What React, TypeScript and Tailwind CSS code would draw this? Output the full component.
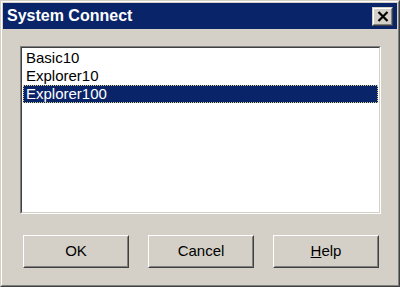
import React from "react";

const font = { fontFamily: '"Liberation Sans", Arial, sans-serif' };

function Btn({ children }: { children: React.ReactNode }) {
  return (
    <div className="w-[106px] h-[33px] border border-t-white border-l-white border-r-[#404040] border-b-[#404040] bg-[#d4d0c8]">
      <div className="w-full h-full border border-t-[#d4d0c8] border-l-[#d4d0c8] border-r-[#808080] border-b-[#808080] flex items-center justify-center text-[15px] text-black">
        {children}
      </div>
    </div>
  );
}

export default function App() {
  const items = ["Basic10", "Explorer10", "Explorer100"];
  return (
    <div
      className="w-[400px] h-[287px] bg-[#d4d0c8] border border-t-[#d4d0c8] border-l-[#d4d0c8] border-r-[#404040] border-b-[#404040]"
      style={font}
    >
      <div className="w-full h-full border border-t-white border-l-white border-r-[#808080] border-b-[#808080] p-[1px] flex flex-col">
        <div className="h-[26px] bg-[#0a246a] flex items-start justify-between pl-[4px] pr-[4px]">
          <span className="text-white font-bold text-[16px] leading-[26px]">System Connect</span>
          <div className="mt-[4px] w-[21px] h-[19px] bg-[#d4d0c8] border border-t-[#d4d0c8] border-l-[#d4d0c8] border-r-[#404040] border-b-[#404040]">
            <div className="w-full h-full border border-t-white border-l-white border-r-[#808080] border-b-[#808080] flex items-center justify-center">
              <svg width="12" height="11" viewBox="0 0 12 11">
                <path d="M1.5 1 L10.5 10 M10.5 1 L1.5 10" stroke="#000" strokeWidth="2.2" />
              </svg>
            </div>
          </div>
        </div>
        <div className="ml-[17px] mt-[17px] w-[361px] h-[168px] border border-t-[#808080] border-l-[#808080] border-r-white border-b-white">
          <div className="w-full h-full border border-t-[#404040] border-l-[#404040] border-r-[#d4d0c8] border-b-[#d4d0c8] bg-white pt-[1px] px-[1px]">
            {items.map((it, i) =>
              i === 2 ? (
                <div
                  key={it}
                  className="h-[18px] bg-[#0a246a] text-white border border-dotted border-[#d8d088] pl-[2px] text-[15px] leading-[16px]"
                >
                  {it}
                </div>
              ) : (
                <div key={it} className="h-[18px] pl-[3px] text-[15px] leading-[18px] text-black">
                  {it}
                </div>
              )
            )}
          </div>
        </div>
        <div className="ml-[20px] mt-[21px] flex gap-[19px]">
          <Btn>OK</Btn>
          <Btn>Cancel</Btn>
          <Btn>
            <span>
              <span className="underline">H</span>elp
            </span>
          </Btn>
        </div>
      </div>
    </div>
  );
}
